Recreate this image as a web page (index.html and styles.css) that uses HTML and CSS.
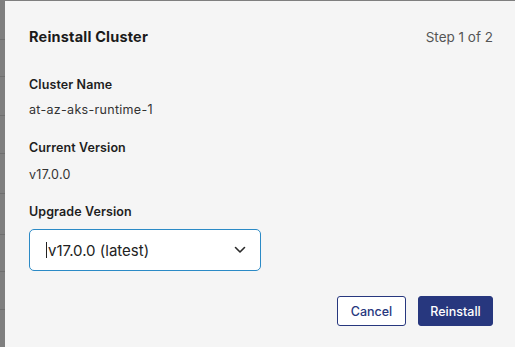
FILE: index.html
```html
<!DOCTYPE html>
<html>
<head>
<meta charset="utf-8">
<link rel="stylesheet" href="styles.css">
</head>
<body>
<div class="screen">
  <div class="backdrop">
    <div class="row r1"></div>
    <div class="row r2"></div>
    <div class="row r3"></div>
    <div class="row r4"></div>
    <div class="row r5"></div>
    <div class="row r6"></div>
    <div class="row r7"></div>
    <div class="row r8"></div>
  </div>
  <div class="dialog">
    <div class="header">
      <div class="title">Reinstall Cluster</div>
      <div class="step">Step 1 of 2</div>
    </div>
    <div class="field f1">
      <div class="label">Cluster Name</div>
      <div class="value">at-az-aks-runtime-1</div>
    </div>
    <div class="field f2">
      <div class="label">Current Version</div>
      <div class="value v2">v17.0.0</div>
    </div>
    <div class="field f3">
      <div class="label">Upgrade Version</div>
      <div class="select">
        <span class="caret"></span>
        <span class="select-text">v17.0.0 (latest)</span>
        <svg class="chevron" width="12" height="8" viewBox="0 0 12 8"><path d="M1.5 1.5 L6 6 L10.5 1.5" fill="none" stroke="#2a2a2a" stroke-width="1.6" stroke-linecap="round" stroke-linejoin="round"/></svg>
      </div>
    </div>
    <div class="actions">
      <button class="btn btn-cancel">Cancel</button>
      <button class="btn btn-primary">Reinstall</button>
    </div>
  </div>
</div>
</body>
</html>
```
FILE: styles.css
```css
html, body {
  margin: 0;
  padding: 0;
  width: 515px;
  height: 347px;
  overflow: hidden;
  background: #7f7f7f;
}
.screen {
  display: flex;
  height: 347px;
  font-family: "Inter", "Open Sans", sans-serif;
}
.backdrop {
  width: 5px;
  display: flex;
  flex-direction: column;
}
.row {
  border-bottom: 1px solid #6f6f6f;
}
.r1 { height: 39px; }
.r2 { height: 36px; }
.r3 { height: 38px; }
.r4 { height: 37px; }
.r5 { height: 39px; }
.r6 { height: 40px; }
.r7 { height: 36px; }
.r8 { height: 37px; }
.dialog {
  flex: 1;
  margin-top: 1px;
  background: #f5f5f5;
  padding: 26px 22px 0 24px;
  box-sizing: border-box;
}
.header {
  display: flex;
  justify-content: space-between;
  align-items: center;
  height: 20px;
}
.title {
  font-size: 14.5px;
  font-weight: 700;
  color: #1b1b1b;
  line-height: 20px;
  letter-spacing: 0.2px;
}
.step {
  font-size: 13.5px;
  color: #555;
  line-height: 20px;
}
.label {
  font-size: 12.5px;
  font-weight: 600;
  color: #1e1e1e;
  line-height: 18px;
  letter-spacing: 0.1px;
}
.value {
  font-size: 12.5px;
  color: #333;
  line-height: 18px;
  margin-top: 7px;
  letter-spacing: 0.3px;
}
.v2 { margin-top: 9px; }
.f1 { margin-top: 29px; }
.f2 { margin-top: 20px; }
.f3 { margin-top: 19px; }
.select {
  margin-top: 8px;
  width: 232px;
  height: 42px;
  box-sizing: border-box;
  border: 1px solid #2b8ac6;
  border-radius: 5px;
  background: #fff;
  display: flex;
  align-items: center;
  padding: 0 14px 0 16px;
}
.caret {
  width: 1px;
  height: 16px;
  background: #222;
  margin-right: 1px;
}
.select-text {
  flex: 1;
  font-size: 15px;
  color: #222;
}
.chevron {
  display: block;
}
.actions {
  display: flex;
  justify-content: flex-end;
  gap: 12px;
  margin-top: 25px;
}
.btn {
  font-family: "Inter", "Open Sans", sans-serif;
  font-size: 12.5px;
  font-weight: 500;
  height: 30px;
  border-radius: 3px;
  box-sizing: border-box;
  padding: 0;
  cursor: pointer;
}
.btn-cancel {
  width: 69px;
  background: #fff;
  border: 1px solid #27377e;
  color: #27377e;
}
.btn-primary {
  width: 75px;
  background: #27377e;
  border: 1px solid #27377e;
  color: #fff;
}
```
